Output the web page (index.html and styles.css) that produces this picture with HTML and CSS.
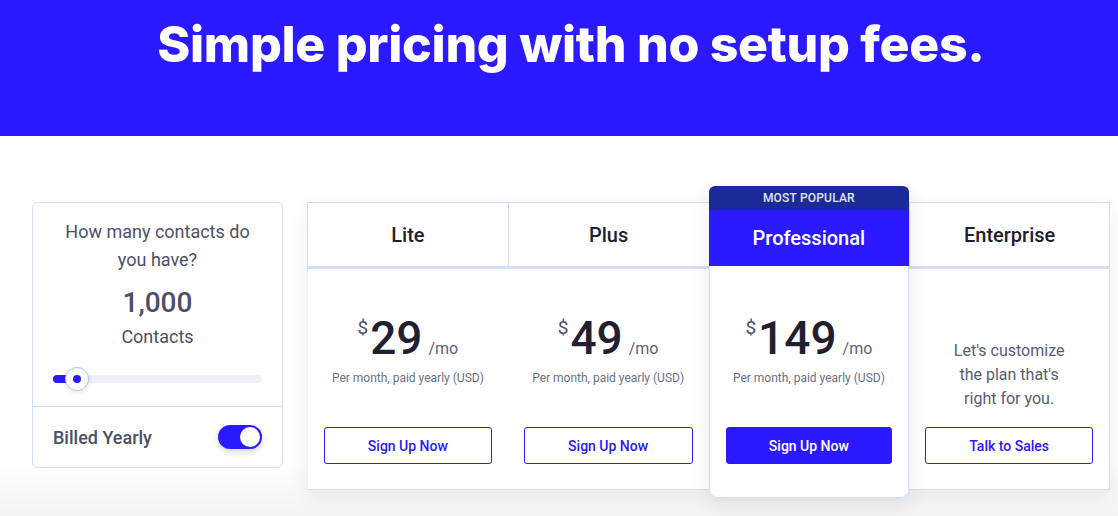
FILE: index.html
```html
<!DOCTYPE html>
<html lang="en">
<head>
    <meta charset="UTF-8">
    <meta name="viewport" content="width=device-width, initial-scale=1.0">
    <title>Pricing</title>
    <link rel="stylesheet" href="styles.css">
</head>
<body>
    <div class="page">
        <header class="hero">
            <h1>Simple pricing with no setup fees.</h1>
        </header>

        <section class="pricing">
            <aside class="calc">
                <div class="calc-top">
                    <p class="calc-q">How many contacts do you have?</p>
                    <div class="calc-num">1,000</div>
                    <div class="calc-unit">Contacts</div>
                    <div class="slider">
                        <div class="slider-fill"></div>
                        <div class="slider-thumb"></div>
                    </div>
                </div>
                <div class="calc-bill">
                    <span>Billed Yearly</span>
                    <span class="toggle"><span class="knob"></span></span>
                </div>
            </aside>

            <div class="plans">
                <div class="plan">
                    <div class="plan-head">Lite</div>
                    <div class="plan-body">
                        <div class="price"><span class="cur">$</span><span>29</span><span class="per">/mo</span></div>
                        <div class="note">Per month, paid yearly (USD)</div>
                        <a class="btn" href="#">Sign Up Now</a>
                    </div>
                </div>
                <div class="plan">
                    <div class="plan-head">Plus</div>
                    <div class="plan-body">
                        <div class="price"><span class="cur">$</span><span>49</span><span class="per">/mo</span></div>
                        <div class="note">Per month, paid yearly (USD)</div>
                        <a class="btn" href="#">Sign Up Now</a>
                    </div>
                </div>
                <div class="plan plan-featured">
                    <div class="plan-tag">MOST POPULAR</div>
                    <div class="plan-head">Professional</div>
                    <div class="plan-body">
                        <div class="price"><span class="cur">$</span><span>149</span><span class="per">/mo</span></div>
                        <div class="note">Per month, paid yearly (USD)</div>
                        <a class="btn btn-solid" href="#">Sign Up Now</a>
                    </div>
                </div>
                <div class="plan">
                    <div class="plan-head">Enterprise</div>
                    <div class="plan-body">
                        <p class="custom">Let's customize the plan that's right for you.</p>
                        <a class="btn" href="#">Talk to Sales</a>
                    </div>
                </div>
            </div>
        </section>
    </div>
</body>
</html>
```

FILE: styles.css
```css
body { margin: 0; overflow: hidden; font-family: Roboto, "Noto Sans", sans-serif; color: #4b5068; background: #fff; }
.page { width: 1142px; }

.hero { height: 136px; background-color: #2b19ff; }
.hero h1 { margin: 0; padding-top: 14px; text-align: center; color: #fff; font-family: Inter, sans-serif; font-weight: 800; font-size: 50px; line-height: 60px; letter-spacing: -0.3px; }

.pricing { display: flex; align-items: flex-start; gap: 24px; padding: 66px 32px 40px; background: linear-gradient(#fff 324px, #f3f3f3 380px); min-height: 380px; box-sizing: border-box; }

/* contacts calculator */
.calc { width: 251px; flex: none; box-sizing: border-box; border: 1px solid #d2ddfa; border-radius: 6px; background: #fff; }
.calc-top { padding: 15px 20px 23px; text-align: center; border-bottom: 1px solid #d2ddfa; }
.calc-q { margin: 0; font-size: 18px; line-height: 28px; }
.calc-num { margin-top: 12px; font-size: 28px; line-height: 34px; font-weight: 500; }
.calc-unit { margin-top: 4px; font-size: 18px; line-height: 26px; }
.slider { position: relative; height: 8px; margin-top: 25px; border-radius: 4px; background: #edf0f8; }
.slider-fill { width: 24px; height: 8px; border-radius: 4px; background: #2b19ff; }
.slider-thumb { position: absolute; left: 12px; top: -8px; width: 22px; height: 22px; border-radius: 50%; background: #fff; border: 1px solid #b3c4f6; box-shadow: 0 1px 4px rgba(40, 50, 120, 0.15); }
.slider-thumb::after { content: ""; position: absolute; left: 7px; top: 7px; width: 8px; height: 8px; border-radius: 50%; background: #2b19ff; }
.calc-bill { display: flex; justify-content: space-between; align-items: center; height: 60px; padding: 0 20px; font-size: 18px; font-weight: 500; }
.toggle { display: flex; justify-content: flex-end; align-items: center; width: 44px; height: 24px; padding: 0 2px; box-sizing: border-box; border-radius: 12px; background: #2b19ff; box-shadow: 0 3px 6px rgba(30, 30, 80, 0.18); }
.knob { width: 20px; height: 20px; border-radius: 50%; background: #fff; }

/* plans table */
.plans { display: flex; width: 803px; flex: none; background: #fff; box-shadow: 0 6px 20px rgba(20, 30, 60, 0.07); }
.plan { flex: 1; display: flex; flex-direction: column; min-width: 0; }
.plan-head { height: 63px; display: flex; align-items: center; justify-content: center; border-top: 1px solid #d2ddfa; border-left: 1px solid #d2ddfa; border-bottom: 3px solid #d2ddfa; font-size: 20px; font-weight: 500; color: #1f2030; }
.plan:last-child .plan-head { border-right: 1px solid #d2ddfa; }
.plan-body { height: 221px; box-sizing: border-box; display: flex; flex-direction: column; align-items: center; padding: 46px 16px 25px; border-bottom: 1px solid #d2ddfa; }
.plan:first-child .plan-body { border-left: 1px solid #eef1fa; }
.plan:last-child .plan-body { border-right: 1px solid #d2ddfa; }

.plan-featured { position: relative; z-index: 1; margin: -16px 0 -8px; border-radius: 6px 6px 8px 8px; box-shadow: 0 6px 20px rgba(20, 30, 60, 0.09); background: #fff; }
.plan-tag { height: 24px; line-height: 24px; text-align: center; font-size: 12px; font-weight: 500; letter-spacing: 0.2px; color: #e2e6f7; background: #1c2a99; border-radius: 6px 6px 0 0; }
.plan-featured .plan-head { height: 56px; border: none; background: #2b19ff; color: #fff; }
.plan-featured .plan-body { flex: 1; height: auto; padding: 49px 16px 33px; border: 1px solid #d2ddfa; border-top: none; border-radius: 0 0 8px 8px; }

.price { display: flex; align-items: baseline; font-size: 46px; line-height: 46px; font-weight: 500; color: #1f2030; white-space: nowrap; }
.cur { align-self: flex-start; font-size: 19px; line-height: 19px; font-weight: 400; color: #4b5068; margin: 3px 2px 0 0; }
.per { font-size: 16px; font-weight: 400; color: #5d6279; margin-left: 6px; }
.note { margin-top: -2px; font-size: 12px; line-height: 16px; color: #6a6f86; }
.custom { margin: 24px 0 0; width: 128px; text-align: center; font-size: 16px; line-height: 24px; color: #575c73; }

.btn { margin-top: auto; width: 100%; height: 37px; box-sizing: border-box; display: flex; align-items: center; justify-content: center; border: 1px solid #2b19ff; border-radius: 3px; color: #2b19ff; font-size: 14px; font-weight: 500; text-decoration: none; }
.btn-solid { background: #2b19ff; color: #fff; }
```
